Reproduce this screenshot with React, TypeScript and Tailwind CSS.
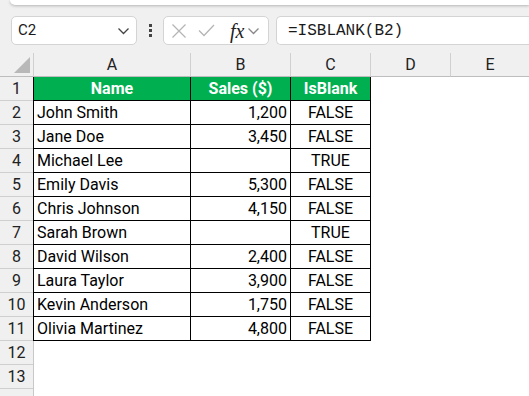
import React from "react";

const rows: [string, string, string][] = [
  ["John Smith", "1,200", "FALSE"],
  ["Jane Doe", "3,450", "FALSE"],
  ["Michael Lee", "", "TRUE"],
  ["Emily Davis", "5,300", "FALSE"],
  ["Chris Johnson", "4,150", "FALSE"],
  ["Sarah Brown", "", "TRUE"],
  ["David Wilson", "2,400", "FALSE"],
  ["Laura Taylor", "3,900", "FALSE"],
  ["Kevin Anderson", "1,750", "FALSE"],
  ["Olivia Martinez", "4,800", "FALSE"],
];

function Chevron({ className }: { className?: string }) {
  return (
    <svg width="13" height="8" viewBox="0 0 13 8" className={className}>
      <path d="M1.5 1.5 L6.5 6.5 L11.5 1.5" fill="none" stroke="currentColor" strokeWidth="1.3" />
    </svg>
  );
}

export default function App() {
  const font = { fontFamily: "Roboto, 'Liberation Sans', sans-serif" };
  return (
    <div className="w-[529px] h-[396px] overflow-hidden bg-white text-[16px] text-[#1a1a1a]" style={font}>
      {/* toolbar area */}
      <div className="h-[53px] bg-[#f0f0f0] relative">
        <div className="h-[5px] ml-[10px] bg-white rounded-bl-[6px] shadow-[0_1px_3px_rgba(0,0,0,0.25)]" />
        <div className="flex items-center mt-[11px] h-[29px]">
          <div className="ml-[11px] w-[126px] h-[29px] bg-white border border-[#d4d4d4] rounded-[5px] flex items-center justify-between pl-[6px] pr-[6px]">
            <span className="text-[15px] text-[#1a1a1a]">C2</span>
            <Chevron className="text-[#444]" />
          </div>
          <div className="w-[26px] flex flex-col items-center gap-[2px]">
            <div className="w-[3px] h-[3px] bg-[#444]" />
            <div className="w-[3px] h-[3px] bg-[#444]" />
            <div className="w-[3px] h-[3px] bg-[#444]" />
          </div>
          <div className="w-[106px] h-[29px] bg-white border border-[#d4d4d4] rounded-[5px] flex items-center pl-[7px]">
            <svg width="16" height="16" viewBox="0 0 16 16">
              <path d="M1.5 1.5 L14.5 14.5 M14.5 1.5 L1.5 14.5" stroke="#b5b5b5" strokeWidth="1.3" fill="none" />
            </svg>
            <svg width="17" height="13" viewBox="0 0 17 13" className="ml-[11px]">
              <path d="M1 6.5 L6 11.5 L16 1" stroke="#b5b5b5" strokeWidth="1.3" fill="none" />
            </svg>
            <span
              className="ml-[15px] text-[20px] italic text-[#222] leading-none"
              style={{ fontFamily: "'Liberation Serif', 'DejaVu Serif', serif" }}
            >
              fx
            </span>
            <Chevron className="ml-[3px] text-[#888]" />
          </div>
          <div className="ml-[7px] flex-1 h-[29px] bg-white border border-r-0 border-[#d4d4d4] rounded-l-[5px] flex items-center pl-[11px]">
            <span className="text-[16px] text-[#1a1a1a]" style={{ fontFamily: "'Liberation Mono', 'DejaVu Sans Mono', monospace" }}>
              =ISBLANK(B2)
            </span>
          </div>
        </div>
      </div>

      {/* grid */}
      <div className="grid grid-cols-[33px_158px_100px_80px_80px_1fr]">
        {/* column headers */}
        <div className="h-[24px] bg-[#f0f0f0] border-b border-[#bdbdbd] relative">
          <svg width="17" height="17" viewBox="0 0 17 17" className="absolute left-[14px] top-[4px]">
            <path d="M16 0 L16 16 L0 16 Z" fill="#b8b8b8" />
          </svg>
        </div>
        {["A", "B", "C", "D", "E"].map((c, i) => (
          <div
            key={c}
            className={
              "h-[24px] pt-[1px] bg-[#f0f0f0] border-b border-[#bdbdbd] flex items-center justify-center text-[#222] " +
              (i === 0 ? "border-l border-l-[#d0d0d0] " : "") +
              (i < 4 ? "border-r border-r-[#d0d0d0]" : "")
            }
          >
            {c}
          </div>
        ))}

        {/* header row 1 */}
        <div className="h-[24px] pt-[1px] bg-[#f0f0f0] border-b border-[#cfcfcf] flex items-center justify-center text-[#222]">1</div>
        <div className="h-[24px] pt-[1px] bg-[#00b050] border-l border-r border-b border-black flex items-center justify-center text-white font-bold">
          Name
        </div>
        <div className="h-[24px] pt-[1px] bg-[#00b050] border-r border-b border-black flex items-center justify-center text-white font-bold">
          Sales ($)
        </div>
        <div className="h-[24px] pt-[1px] bg-[#00b050] border-r border-b border-black flex items-center justify-center text-white font-bold">
          IsBlank
        </div>
        <div className="h-[24px]" />
        <div className="h-[24px]" />

        {rows.map((r, i) => (
          <React.Fragment key={i}>
            <div className="h-[24px] pt-[1px] bg-[#f0f0f0] border-b border-[#cfcfcf] flex items-center justify-center text-[#222]">
              {i + 2}
            </div>
            <div className="h-[24px] pt-[1px] border-l border-r border-b border-black flex items-center pl-[3px] text-black">{r[0]}</div>
            <div className="h-[24px] pt-[1px] border-r border-b border-black flex items-center justify-end pr-[3px] text-black">{r[1]}</div>
            <div className="h-[24px] pt-[1px] border-r border-b border-black flex items-center justify-center text-black">{r[2]}</div>
            <div className="h-[24px]" />
            <div className="h-[24px]" />
          </React.Fragment>
        ))}

        {[12, 13, 14].map((n) => (
          <React.Fragment key={n}>
            <div className="h-[24px] pt-[1px] bg-[#f0f0f0] border-b border-[#cfcfcf] flex items-center justify-center text-[#222]">
              {n === 14 ? "" : n}
            </div>
            <div className="h-[24px] border-l border-l-[#c8c8c8]" />
            <div className="h-[24px]" />
            <div className="h-[24px]" />
            <div className="h-[24px]" />
            <div className="h-[24px]" />
          </React.Fragment>
        ))}
      </div>
    </div>
  );
}
